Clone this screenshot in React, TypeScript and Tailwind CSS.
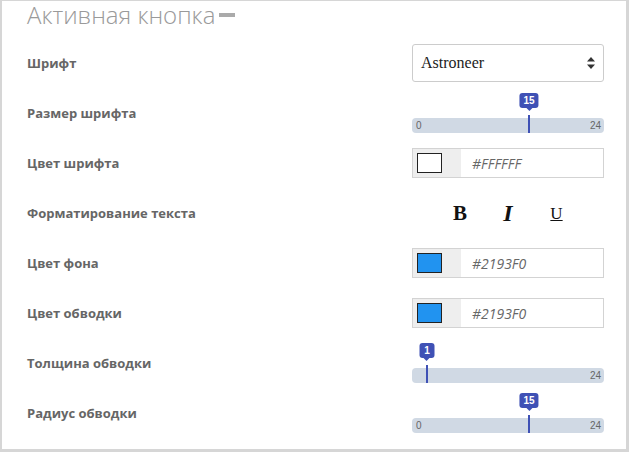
import React from "react";

const labelCls =
  "flex-1 pt-[2px] text-[13px] font-bold text-[#666] [font-family:'Open_Sans',sans-serif]";

function Row({ label, children, top = false }: { label: string; children: React.ReactNode; top?: boolean }) {
  return (
    <div className="flex h-[50px] items-center">
      <div className={labelCls}>{label}</div>
      <div className={`w-[192px] flex ${top ? "self-start" : ""}`}>{children}</div>
    </div>
  );
}

function Slider({ value, showZero = true }: { value: number; showZero?: boolean }) {
  const x = 7.7 + value * 7.286;
  return (
    <div className="relative mt-[30px] h-[15px] w-[192px] rounded-[4px] bg-[#d0d9e4]">
      {showZero && (
        <span className="absolute left-[4px] top-0 text-[10px] leading-[15px] text-[#666] [font-family:'Liberation_Sans',Arial,sans-serif]">
          0
        </span>
      )}
      <span className="absolute right-[3px] top-0 text-[10px] leading-[15px] text-[#666] [font-family:'Liberation_Sans',Arial,sans-serif]">
        24
      </span>
      <div className="absolute top-[-3px] h-[18px] w-[2px] bg-[#3f51b5]" style={{ left: x - 1 }} />
      <div className="absolute top-[-25px] flex -translate-x-1/2 flex-col items-center" style={{ left: x }}>
        <div className="flex h-[15px] min-w-[15px] items-center justify-center rounded-[3px] bg-[#3f51b5] px-[4px] text-[10px] font-bold leading-none text-white [font-family:'Liberation_Sans',Arial,sans-serif]">
          {value}
        </div>
        <div className="h-0 w-0 border-x-[3px] border-t-[3px] border-x-transparent border-t-[#3f51b5]" />
      </div>
    </div>
  );
}

function ColorInput({ color, text }: { color: string; text: string }) {
  return (
    <div className="flex h-[30px] w-[192px] border border-[#d3d3d3] bg-white">
      <div className="flex w-[48px] items-center bg-[#eeeeee] pl-[4px]">
        <div className="h-[20px] w-[25px] border border-[#222]" style={{ background: color }} />
      </div>
      <div className="flex items-center pl-[11px] text-[14px] italic text-[#666] [font-family:'Open_Sans',sans-serif]">
        {text}
      </div>
    </div>
  );
}

export default function App() {
  return (
    <div className="h-[452px] w-[629px] overflow-hidden border-t border-l-2 border-r-[3px] border-b-[3px] border-[#d6d6d6] bg-white">
      <div className="pl-[25px] pr-[22px]">
        <div className="flex h-[37px] items-start">
          <div className="pt-[2px] text-[24px] font-light leading-[24px] text-[#9a9a9a] [font-family:'Open_Sans',sans-serif]">
            Активная кнопка
          </div>
          <div className="ml-[4px] mt-[12px] h-[4px] w-[16px] bg-[#aaaaaa]" />
        </div>

        <Row label="Шрифт">
          <div className="flex h-[38px] w-[192px] items-center justify-between rounded-[3px] border border-[#ccc] bg-white pl-[8px] pr-[8px]">
            <span className="text-[16px] text-[#222] [font-family:'Liberation_Serif',serif]">Astroneer</span>
            <svg width="8" height="12" viewBox="0 0 8 12">
              <path d="M4 0 L8 4.5 L0 4.5 Z" fill="#333" />
              <path d="M0 7.5 L8 7.5 L4 12 Z" fill="#333" />
            </svg>
          </div>
        </Row>

        <Row label="Размер шрифта" top>
          <Slider value={15} />
        </Row>

        <Row label="Цвет шрифта">
          <ColorInput color="#FFFFFF" text="#FFFFFF" />
        </Row>

        <Row label="Форматирование текста">
          <div className="flex w-[192px] items-center [font-family:'Liberation_Serif',serif] text-[#111]">
            <span className="ml-[41px] w-[14px] text-center text-[21px] font-bold leading-none">B</span>
            <span className="ml-[34px] w-[14px] text-center text-[24px] font-semibold italic leading-none">I</span>
            <span className="ml-[33px] w-[17px] text-center text-[17px] leading-none underline">U</span>
          </div>
        </Row>

        <Row label="Цвет фона">
          <ColorInput color="#2193F0" text="#2193F0" />
        </Row>

        <Row label="Цвет обводки">
          <ColorInput color="#2193F0" text="#2193F0" />
        </Row>

        <Row label="Толщина обводки" top>
          <Slider value={1} showZero={false} />
        </Row>

        <Row label="Радиус обводки" top>
          <Slider value={15} />
        </Row>

        <div className="pt-[9px] text-[24px] font-light leading-[24px] text-[#9a9a9a] [font-family:'Open_Sans',sans-serif]">
          Эффект при наведении
        </div>
      </div>
    </div>
  );
}
